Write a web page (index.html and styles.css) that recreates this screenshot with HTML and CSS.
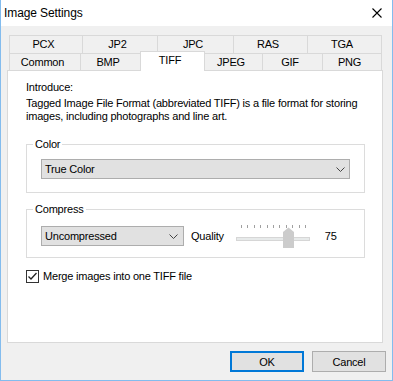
FILE: index.html
```
<!DOCTYPE html>
<html lang="en">

<head>
    <meta charset="UTF-8">
    <meta name="viewport" content="width=device-width, initial-scale=1.0">
    <title>Image Settings</title>
    <link rel="stylesheet" href="styles.css">
</head>

<body>

    <div class="window">
        <div class="titlebar">
            <span class="title">Image Settings</span>
            <svg class="close" width="10" height="10" viewBox="0 0 10 10">
                <path d="M0.5 0.5 L9.5 9.5 M9.5 0.5 L0.5 9.5" stroke="#000" stroke-width="1.1" fill="none" />
            </svg>
        </div>

        <div class="client">
            <div class="tabs">
                <div class="tab-row back">
                    <div class="tab first" style="width: 74px;">PCX</div>
                    <div class="tab" style="width: 75px;">JP2</div>
                    <div class="tab" style="width: 76px;">JPC</div>
                    <div class="tab" style="width: 74px;">RAS</div>
                    <div class="tab" style="width: 74px;">TGA</div>
                </div>
                <div class="tab-row front">
                    <div class="tab first" style="width: 72px;">Common</div>
                    <div class="tab" style="width: 60px;">BMP</div>
                    <div class="tab active" style="width: 65px;">TIFF</div>
                    <div class="tab" style="width: 58px;">JPEG</div>
                    <div class="tab" style="width: 60px;">GIF</div>
                    <div class="tab" style="width: 59px;">PNG</div>
                </div>
            </div>

            <div class="panel">
                <p class="intro-title">Introduce:</p>
                <p class="intro-text">Tagged Image File Format (abbreviated TIFF) is a file format for storing<br>images, including photographs and line art.</p>

                <fieldset class="group">
                    <legend>Color</legend>
                    <div class="combo">
                        <span>True Color</span>
                        <svg width="9" height="5" viewBox="0 0 9 5">
                            <path d="M0.5 0.5 L4.5 4.5 L8.5 0.5" stroke="#444" fill="none" />
                        </svg>
                    </div>
                </fieldset>

                <fieldset class="group compress">
                    <legend>Compress</legend>
                    <div class="compress-row">
                        <div class="combo small">
                            <span>Uncompressed</span>
                            <svg width="9" height="5" viewBox="0 0 9 5">
                                <path d="M0.5 0.5 L4.5 4.5 L8.5 0.5" stroke="#444" fill="none" />
                            </svg>
                        </div>
                        <span class="quality">Quality</span>
                        <svg class="slider" width="80" height="24" viewBox="0 0 80 24">
                            <g stroke="#a0a0a0" stroke-width="1">
                                <path d="M10.5 1 V4 M16.5 1 V4 M23.5 1 V4 M29.5 1 V4 M36.5 1 V4 M42.5 1 V4 M48.5 1 V4 M55.5 1 V4 M61.5 1 V4 M68.5 1 V4 M74.5 1 V4" />
                            </g>
                            <rect x="5.5" y="13.5" width="73" height="3" fill="#e7eaea" stroke="#d6d6d6" />
                            <path d="M52 8 L57.5 3.5 L63 8 V24 H52 Z" fill="#cccccc" />
                        </svg>
                        <span class="value">75</span>
                    </div>
                </fieldset>

                <label class="check">
                    <svg width="13" height="13" viewBox="0 0 13 13">
                        <rect x="0.5" y="0.5" width="12" height="12" fill="#fff" stroke="#333" />
                        <path d="M2.5 6.5 L5 9 L10.5 3" stroke="#222" stroke-width="1.3" fill="none" />
                    </svg>
                    <span>Merge images into one TIFF file</span>
                </label>
            </div>

            <div class="buttons">
                <button class="btn default">OK</button>
                <button class="btn">Cancel</button>
            </div>
        </div>
    </div>

</body>

</html>
```

FILE: styles.css
```
* {
    margin: 0;
    padding: 0;
    box-sizing: border-box;
}

body {
    font-family: 'Liberation Sans', Arial, sans-serif;
    font-size: 11px;
    letter-spacing: -0.2px;
    color: #000;
    background: #fff;
}

.window {
    width: 393px;
    height: 381px;
    background: #f0f0f0;
    border: 1px solid #83bcee;
    border-top: none;
}

/* TITLE BAR ================================== */
.titlebar {
    height: 26px;
    background: #fff;
    display: flex;
    align-items: center;
    padding-left: 3px;
}

.title {
    flex: 1;
    font-size: 12px;
    letter-spacing: -0.1px;
}

.close {
    margin-right: 10px;
}

/* TABS ======================================= */
.client {
    padding: 9px 0 0 6px;
}

.tabs {
    margin-left: 2px;
}

.tab-row {
    display: flex;
}

.tab {
    display: flex;
    align-items: center;
    justify-content: center;
    padding-right: 5px;
    border-top: 1px solid #d9d9d9;
    border-right: 1px solid #d9d9d9;
    background: #f0f0f0;
    line-height: 13px;
}

.tab.first {
    border-left: 1px solid #d9d9d9;
}

.back .tab {
    height: 18px;
}

.front {
    height: 17px;
}

.front .tab {
    height: 17px;
    padding-top: 1px;
}

.tab.active {
    position: relative;
    z-index: 1;
    background: #fff;
    height: 20px;
    margin-top: -2px;
    margin-left: -1px;
    border-left: 1px solid #d9d9d9;
    padding-top: 0;
    padding-bottom: 2px;
}

/* PANEL ====================================== */
.panel {
    width: 376px;
    height: 273px;
    background: #fff;
    border: 1px solid #d9d9d9;
    padding: 10px 17px 0 18px;
    line-height: 13px;
}

.intro-text {
    margin-top: 3px;
    white-space: nowrap;
}

.group {
    margin-top: 15px;
    border: 1px solid #dcdcdc;
    padding: 8px 14px 13px 14px;
}

.group legend {
    margin-left: -8px;
    padding: 0 2px;
    line-height: 13px;
}

.group.compress {
    margin-top: 10px;
    padding-bottom: 9px;
}

.combo {
    height: 20px;
    background: #e1e1e1;
    border: 1px solid #adadad;
    display: flex;
    align-items: center;
    justify-content: space-between;
    padding: 0 4px 0 3px;
}

.combo.small {
    width: 143px;
    padding-right: 5px;
}

.compress-row {
    display: flex;
    align-items: center;
    height: 24px;
}

.quality {
    margin-left: 7px;
}

.slider {
    margin-left: 7px;
    align-self: flex-start;
}

.value {
    margin-left: 14px;
}

.check {
    display: flex;
    align-items: center;
    gap: 4px;
    margin-top: 12px;
}

/* BUTTONS ==================================== */
.buttons {
    display: flex;
    justify-content: flex-end;
    gap: 8px;
    padding-right: 6px;
    margin-top: 8px;
}

.btn {
    width: 74px;
    height: 21px;
    background: #e1e1e1;
    border: 1px solid #adadad;
    font-family: 'Liberation Sans', Arial, sans-serif;
    font-size: 11px;
    letter-spacing: -0.2px;
    color: #000;
}

.btn.default {
    border: 2px solid #0078d7;
}
```
